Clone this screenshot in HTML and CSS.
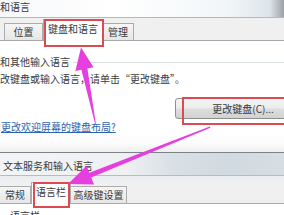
FILE: index.html
```html
<!DOCTYPE html>
<html>
<head>
<meta charset="utf-8">
<link rel="stylesheet" href="styles.css">
</head>
<body>
<div class="screen">
  <div class="win1">
    <div class="title1"><span class="title1-text">和语言</span><span class="title1-corner"></span></div>
    <div class="tabs1">
      <div class="tab tab-loc">位置</div>
      <div class="tab tab-sel tab-kb marked">键盘和语言</div>
      <div class="tab tab-mgr">管理</div>
    </div>
    <div class="panel1">
      <div class="group"><span class="group-label">和其他输入语言</span><span class="group-line"></span></div>
      <div class="desc">改键盘或输入语言，请单击“更改键盘”。</div>
      <div class="btnrow"><div class="btn marked-btn">更改键盘(C)...</div></div>
      <div class="link">更改欢迎屏幕的键盘布局?</div>
    </div>
    <div class="gap"></div>
  </div>
  <div class="win2">
    <div class="title2"><span class="title2-text">文本服务和输入语言</span></div>
    <div class="tabs2">
      <div class="tab tab-gen">常规</div>
      <div class="tab tab-sel tab-bar marked2">语言栏</div>
      <div class="tab tab-adv">高级键设置</div>
    </div>
    <div class="panel2"><div class="panel2-text">语言栏</div></div>
  </div>
  <svg class="arrows" width="284" height="215" viewBox="0 0 284 215">
    <polygon fill="#e63fe0" points="95.6,122 87.4,68.6 93.6,67.2 81,47.5 75.4,71 81.4,69.8 94.6,122"/>
    <polygon fill="#e63fe0" points="210.4,127.8 91.2,177.4 94,184.4 68,184 86.6,165.8 89.4,172.8 209.8,126.6"/>
  </svg>
</div>
</body>
</html>
```

FILE: styles.css
```css
* { box-sizing: border-box; }
html, body { margin: 0; padding: 0; }
body {
  width: 284px;
  height: 215px;
  overflow: hidden;
  background: #fff;
  font-family: "Noto Sans CJK SC", "Noto Sans", sans-serif;
  font-size: 10px;
  color: #3a3a3a;
}
.screen {
  position: relative;
  width: 284px;
  height: 215px;
  overflow: hidden;
}
.title1 {
  height: 18px;
  border-bottom: 1px solid #b4b8bc;
  background: linear-gradient(to right, #f7f8fa 0%, #ffffff 40%, #f2f6f8 80%, #dde5ea 95%, #9aa0a6 100%);
  display: flex;
  align-items: center;
  line-height: 12px;
  padding-bottom: 3px;
}
.title1-text { margin-left: 0; }
.title1-corner { flex: 1; }
.tabs1 {
  height: 23px;
  background: #f0f0f0;
  border-bottom: 1px solid #a9a9a9;
  display: flex;
  align-items: flex-end;
  padding-left: 4px;
}
.tab {
  height: 17px;
  border: 1px solid #acacac;
  border-bottom: none;
  background: linear-gradient(#f6f6f6, #e6e6e6);
  display: flex;
  align-items: center;
  justify-content: center;
  line-height: 12px;
  white-space: nowrap;
}
.tab-sel {
  height: 22px;
  background: #fff;
  margin-bottom: -1px;
  position: relative;
  padding-bottom: 3px;
}
.tab-loc { width: 39px; }
.tab-kb { width: 60px; }
.tab-mgr { width: 31px; border-left: none; }
.marked::after {
  content: "";
  position: absolute;
  left: 0;
  top: -1px;
  right: -2px;
  bottom: -6px;
  border: 2px solid #dc4b53;
}
.panel1 {
  background: #fff;
}
.group {
  margin-top: 15px;
  height: 12px;
  display: flex;
  align-items: center;
  line-height: 12px;
}
.group-label { margin-left: 0; white-space: nowrap; }
.group-line {
  flex: 1;
  height: 1px;
  margin-left: 3px;
  background: #d8dde2;
}
.desc {
  margin-top: 5px;
  height: 12px;
  line-height: 12px;
  margin-left: 0;
  white-space: nowrap;
}
.btnrow {
  margin-top: 13px;
  height: 21px;
  display: flex;
}
.btn {
  margin-left: 175px;
  width: 136px;
  flex: none;
  height: 21px;
  border: 1px solid #8e8f8f;
  border-radius: 3px;
  background: linear-gradient(#f4f4f4 0%, #ececec 48%, #dedede 52%, #d2d2d2 100%);
  display: flex;
  align-items: center;
  justify-content: center;
  line-height: 12px;
  position: relative;
  white-space: nowrap;
}
.marked-btn::after {
  content: "";
  position: absolute;
  left: 6px;
  top: -2px;
  right: -22px;
  bottom: -7px;
  border: 2px solid #dc4b53;
}
.link {
  margin-top: 2px;
  height: 12px;
  line-height: 12px;
  margin-left: 1px;
  color: #2d63ad;
  text-decoration: underline;
  white-space: nowrap;
}
.gap {
  height: 19px;
  background: linear-gradient(#ffffff 0%, #fbfbfb 60%, #eeeeee 100%);
}
.win2 {
  border-top: 1px solid #7d8288;
}
.title2 {
  height: 23px;
  border-bottom: 1px solid #b8bcc0;
  background: linear-gradient(to right, #f3f4f5 0%, #eef0f2 45%, #d9e0e6 60%, #d2dae1 80%, #d6dde3 100%);
  display: flex;
  align-items: center;
  line-height: 12px;
  padding-top: 4px;
}
.title2-text { margin-left: 3px; white-space: nowrap; }
.tabs2 {
  height: 28px;
  background: linear-gradient(#e9edf0, #f0f0f0 30%);
  border-bottom: 1px solid #a9a9a9;
  display: flex;
  align-items: flex-end;
}
.tab-gen { width: 31px; border-left: none; }
.tab-bar { width: 40px; }
.tab-adv { width: 56px; border-left: none; }
.marked2::after {
  content: "";
  position: absolute;
  left: 1px;
  top: -1px;
  right: 0;
  bottom: -4px;
  border: 2px solid #dc4b53;
}
.panel2 {
  background: #fff;
  height: 20px;
}
.panel2-text {
  margin-top: 6px;
  margin-left: 10px;
  line-height: 12px;
}
.arrows {
  position: absolute;
  left: 0;
  top: 0;
  pointer-events: none;
}
```
